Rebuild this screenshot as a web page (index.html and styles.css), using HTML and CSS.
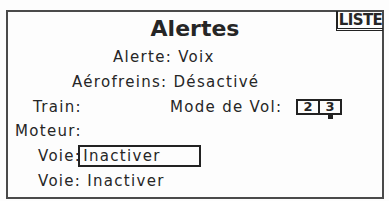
FILE: index.html
```html
<!DOCTYPE html>
<html lang="fr">
<head>
    <meta charset="UTF-8">
    <title>Alertes</title>
    <link rel="stylesheet" href="styles.css">
</head>
<body>

<div class="screen">
    <div class="screen__tab">LISTE</div>
    <h1 class="screen__title">Alertes</h1>
    <div class="screen__row screen__row--alert">Alerte: Voix</div>
    <div class="screen__row screen__row--brake">Aérofreins: Désactivé</div>
    <div class="screen__row screen__row--gear">
        <span class="screen__label">Train:</span>
        <span class="screen__mode">Mode de Vol:</span>
        <span class="modes">
            <span class="modes__cell">2</span>
            <span class="modes__cell modes__cell--current">3</span>
        </span>
    </div>
    <div class="screen__row screen__row--motor">Moteur:</div>
    <div class="screen__row screen__row--channel">
        Voie:<span class="field">Inactiver</span>
    </div>
    <div class="screen__row screen__row--channel">Voie: Inactiver</div>
</div>

</body>
</html>
```

FILE: styles.css
```css
body {
    margin: 0;
    background: #fdfdfd;
    font-family: "DejaVu Sans", sans-serif;
    color: #262626;
}
.screen {
    position: relative;
    box-sizing: border-box;
    width: 378px;
    height: 189px;
    margin-top: 10px;
    margin-left: 6px;
    border: 2px solid #4a4a4a;
}
.screen__tab {
    position: absolute;
    top: -1px;
    right: -1px;
    width: 45px;
    height: 17px;
    border-left: 2px solid #222;
    border-bottom: 3px double #222;
    font-size: 15px;
    font-weight: bold;
    line-height: 18px;
    text-align: center;
    letter-spacing: -0.6px;
}
.screen__title {
    margin: 0;
    height: 33px;
    font-size: 22px;
    line-height: 33px;
    text-align: center;
}
.screen__row {
    display: flex;
    align-items: center;
    height: 24.7px;
    font-size: 15px;
    letter-spacing: 1.3px;
    white-space: nowrap;
}
.screen__row--alert {
    padding-left: 105px;
}
.screen__row--brake {
    padding-left: 64px;
}
.screen__row--gear {
    padding-left: 25px;
}
.screen__label {
    width: 137px;
}
.screen__mode {
    width: 126px;
}
.screen__row--motor {
    padding-left: 7px;
}
.screen__row--channel {
    padding-left: 30px;
}
.modes {
    position: relative;
    display: flex;
    border: 2px solid #222;
    letter-spacing: 0;
}
.modes__cell {
    width: 20px;
    height: 12px;
    font-size: 13px;
    font-weight: bold;
    line-height: 12px;
    text-align: center;
}
.modes__cell--current {
    border-left: 2px solid #222;
}
.modes__cell--current::after {
    content: "";
    position: absolute;
    right: 7px;
    bottom: -6px;
    width: 5px;
    height: 4px;
    background: #222;
}
.field {
    box-sizing: border-box;
    width: 123px;
    height: 22px;
    margin-left: -3px;
    padding-left: 3px;
    border: 2px solid #222;
    line-height: 18px;
}
```
